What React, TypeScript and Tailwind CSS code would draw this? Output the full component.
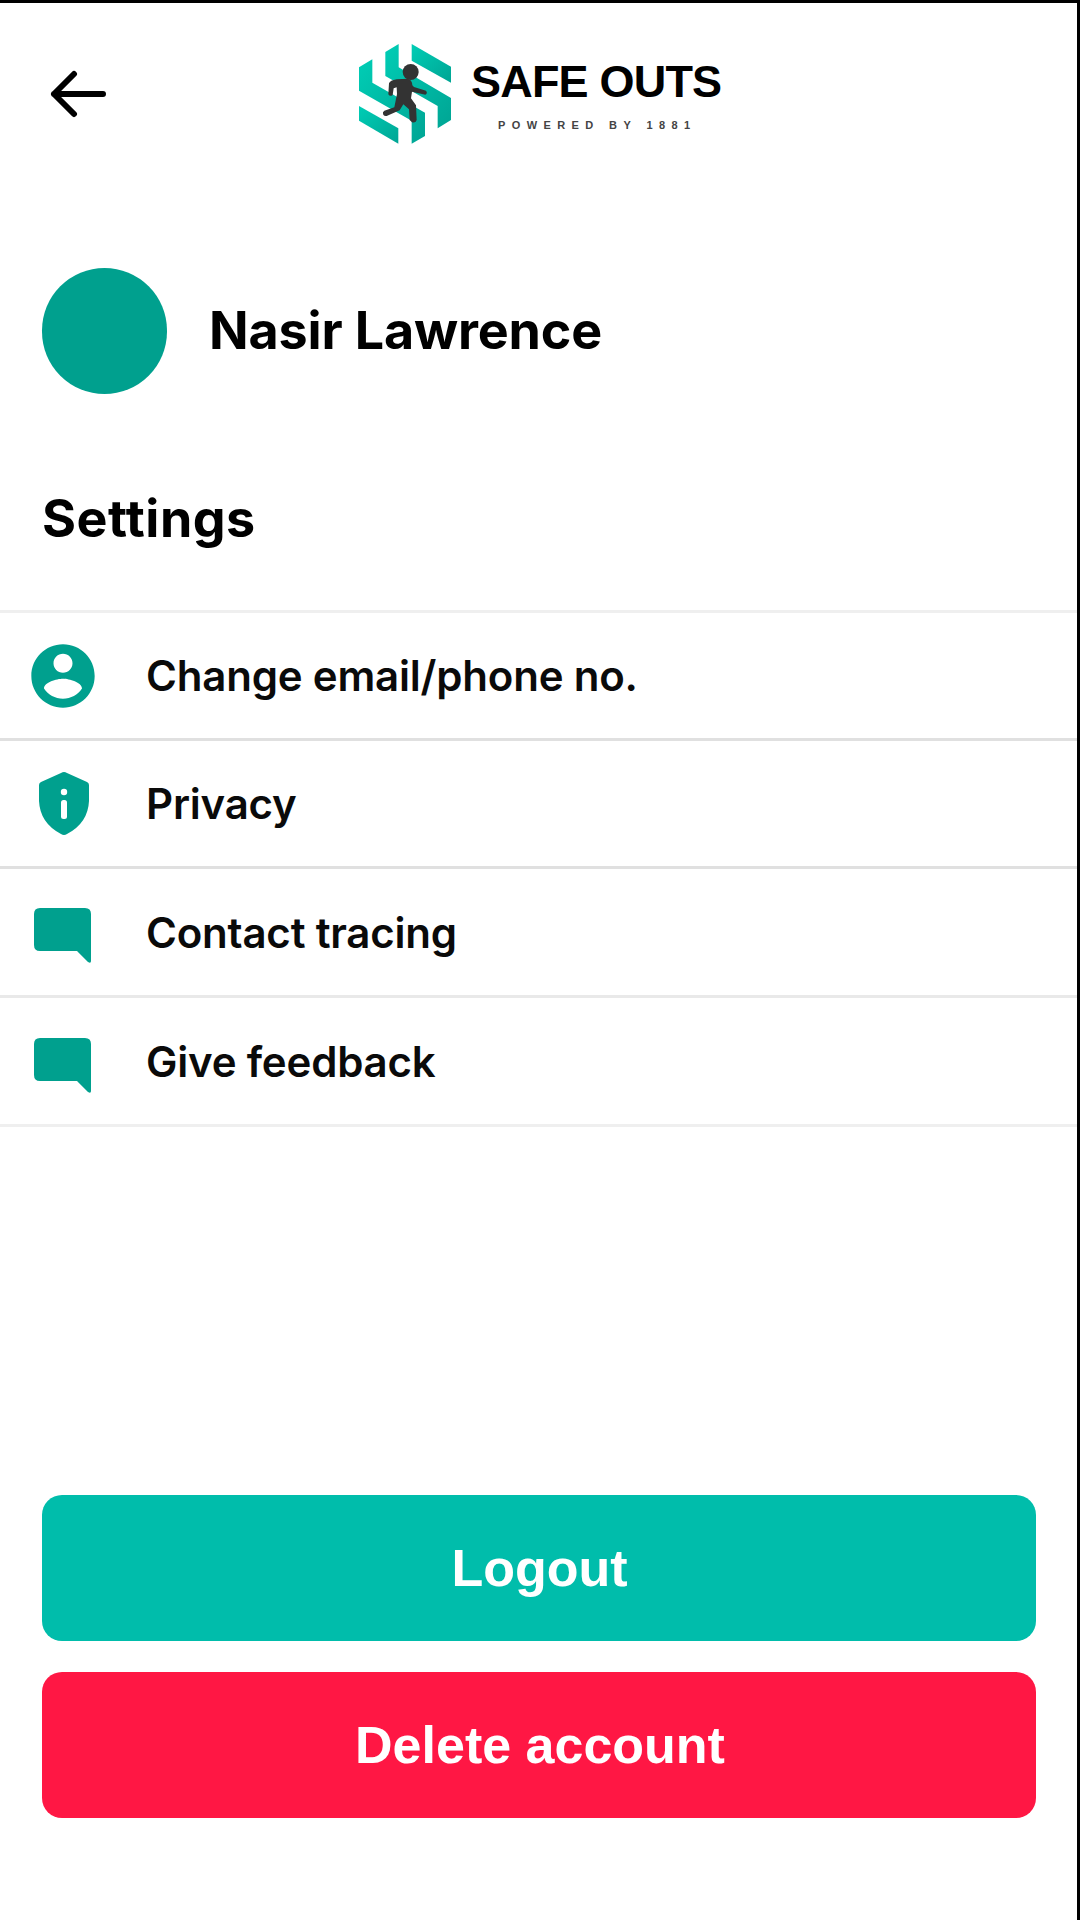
import type { ReactNode } from "react";

const Logo = () => (
  <svg viewBox="0 0 390 390" className="h-[130px] w-[130px] shrink-0">
    <defs>
      <linearGradient id="mark" x1="0" y1="0" x2="1" y2="1">
        <stop offset="0" stopColor="#00cdb5" />
        <stop offset="1" stopColor="#00a594" />
      </linearGradient>
    </defs>
    <g fill="url(#mark)">
      <path d="M215 42 333 110V158L215 92Z" />
      <path d="M136 66 176 42V112L333 204V270L293 295V228L136 138Z" />
      <path d="M57 112 97 88V158L255 248V318L215 341V272L57 182Z" />
      <path d="M57 228 175 295V341L57 272Z" />
    </g>
    <circle cx="212" cy="126" r="24" fill="#333" />
    <path d="M170 148 203 146Q216 148 217 166L222 171 258 182Q264 189 256 194L216 185 213 205 228 226 230 270Q227 280 216 277L209 270 207 238 190 223 179 241 140 258Q128 260 129 247L133 242 163 232 171 192 170 172 161 175 158 195Q150 201 145 193L147 160Q150 151 170 148Z" fill="#333" />
  </svg>
);

const BackIcon = () => (
  <svg viewBox="0 0 58 48" className="h-12 w-[58px]" fill="none" stroke="#000" strokeWidth="6" strokeLinecap="round" strokeLinejoin="round">
    <path d="M54 24H5M25 4 5 24 25 44" />
  </svg>
);

const AccountIcon = () => (
  <svg viewBox="0 0 24 24" className="h-[76px] w-[76px]" fill="#00a08e">
    <path d="M12 2C6.48 2 2 6.48 2 12s4.48 10 10 10 10-4.48 10-10S17.52 2 12 2zm0 3c1.66 0 3 1.34 3 3s-1.34 3-3 3-3-1.34-3-3 1.34-3 3-3zm0 14.2c-2.5 0-4.71-1.28-6-3.22.03-1.99 4-3.08 6-3.08 1.99 0 5.97 1.09 6 3.08-1.29 1.94-3.5 3.22-6 3.22z" />
  </svg>
);

const ShieldIcon = () => (
  <svg viewBox="0 0 50 63" className="h-[63px] w-[50px]">
    <path d="M22 1Q25 -1 28 1L48 10Q50 11 50 13V29Q49 51 28 62Q25 64 22 62Q1 51 0 29V13Q0 11 2 10Z" fill="#00a08e" />
    <circle cx="25" cy="20" r="3.2" fill="#fff" />
    <rect x="22" y="28" width="6" height="19" rx="2.5" fill="#fff" />
  </svg>
);

const CommentIcon = () => (
  <svg viewBox="0 0 57 55" className="h-[55px] w-[57px]">
    <path d="M6 0H51Q57 0 57 6V53Q57 56 54 54L43 43H6Q0 43 0 37V6Q0 0 6 0Z" fill="#00a08e" />
  </svg>
);

const Row = ({ icon, label, className }: { icon: ReactNode; label: string; className: string }) => (
  <li className={`flex items-center border-b-[3px] ${className}`}>
    <div className="flex w-[146px] shrink-0">{icon}</div>
    <span className="pt-px text-[42px] leading-none font-semibold tracking-[-0.2px] text-[#0a0a0a]">{label}</span>
  </li>
);

const App = () => {
  return (
    <div className="flex h-[1920px] w-[1080px] flex-col border-t-[3px] border-r-[3px] border-black bg-white font-[Inter,sans-serif] text-black">
      <header className="flex h-[185px] pt-[27px]">
        <button className="ml-[49px] flex h-[128px] w-[291px] items-center">
          <BackIcon />
        </button>
        <Logo />
        <div className="flex flex-col pt-[28px] font-['Liberation_Sans',sans-serif]">
          <span className="ml-px text-[45px] leading-[48px] font-bold tracking-[-0.8px] whitespace-nowrap">SAFE OUTS</span>
          <span className="mt-[12px] ml-[28px] text-[11px] leading-[14px] font-bold tracking-[6.4px] whitespace-nowrap text-[#444]">POWERED BY 1881</span>
        </div>
      </header>

      <section className="mt-[80px] flex items-center gap-[42px] pl-[42px]">
        <div className="h-[126px] w-[125px] rounded-full bg-[#00a08e]" />
        <h1 className="text-[52px] leading-none font-bold tracking-[-0.15px]">Nasir Lawrence</h1>
      </section>

      <h2 className="mt-[99px] pl-[42px] text-[52px] leading-none font-bold tracking-[0.5px]">Settings</h2>

      <ul className="mt-[65px] border-t-[3px] border-[#efefef]">
        <Row icon={<div className="ml-[25px]"><AccountIcon /></div>} label="Change email/phone no." className="h-[128px] border-[#e0e0e0]" />
        <Row icon={<div className="ml-[39px]"><ShieldIcon /></div>} label="Privacy" className="h-[128px] border-[#e0e0e0]" />
        <Row icon={<div className="ml-[34px] pt-[6px]"><CommentIcon /></div>} label="Contact tracing" className="h-[129px] border-[#e9e9e9]" />
        <Row icon={<div className="ml-[34px] pt-[8px]"><CommentIcon /></div>} label="Give feedback" className="h-[129px] border-[#efefef]" />
      </ul>

      <div className="mt-auto mb-[102px] ml-[42px] flex w-[994px] flex-col gap-[31px] font-['Liberation_Sans',sans-serif] text-[52px] font-bold text-white">
        <button className="h-[146px] rounded-[20px] bg-[#00bdab] pl-px">Logout</button>
        <button className="h-[146px] rounded-[20px] bg-[#ff1744] pl-[2px]">Delete account</button>
      </div>
    </div>
  );
};

export default App;
